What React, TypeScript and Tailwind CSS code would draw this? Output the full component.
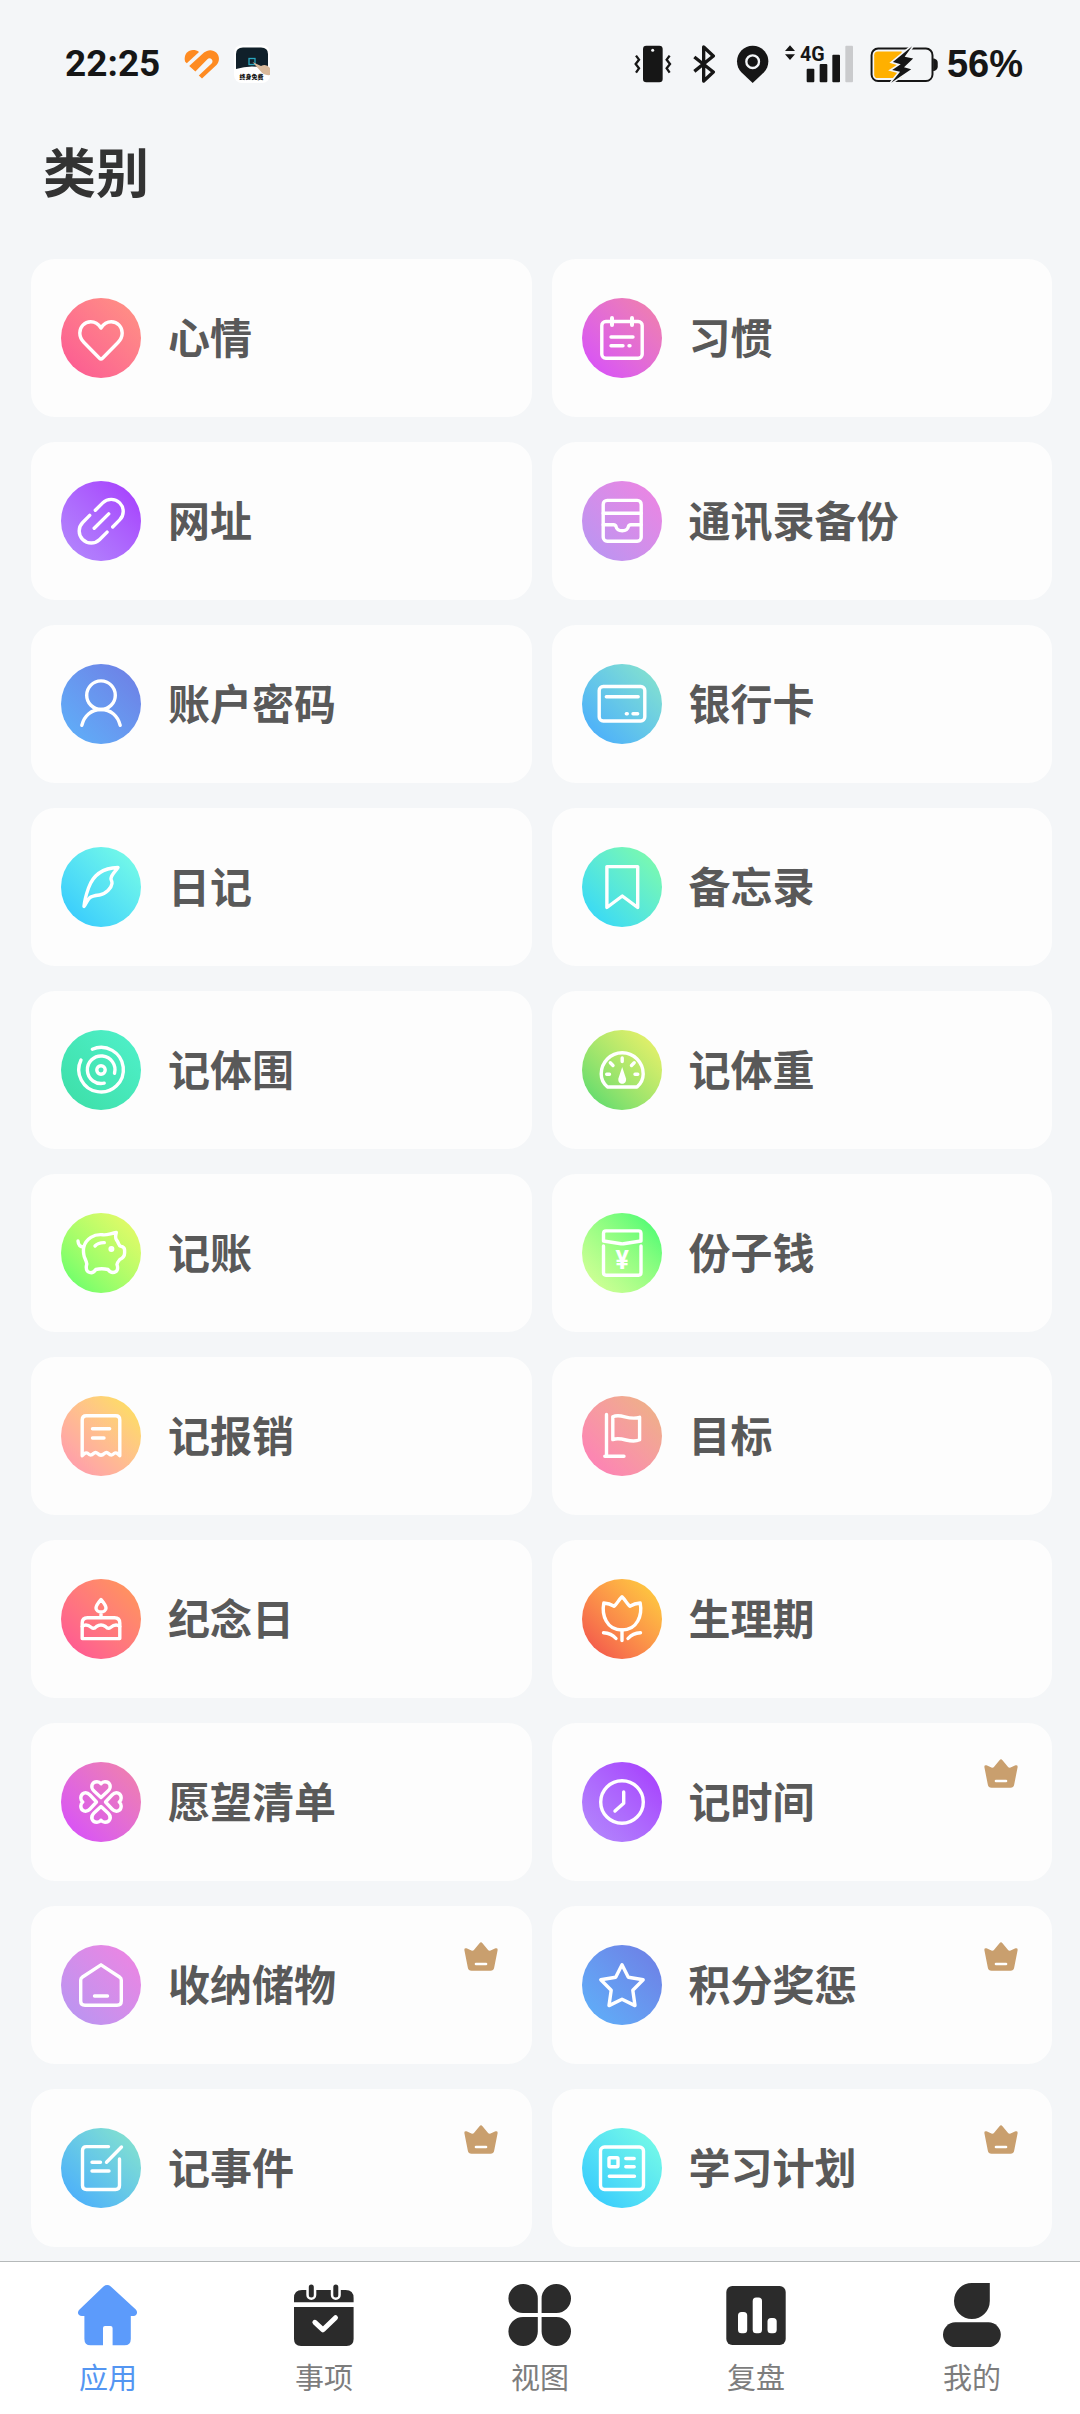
import type { ReactNode } from "react";

type Category = {
  name: string;
  gradient: string;
  icon: ReactNode;
  vip?: boolean;
};

const categories: Category[] = [
  {
    name: "心情",
    gradient: "from-[#fb5594] to-[#ff9482]",
    icon: (
      <path d="M40 30C37 25.5 33.5 23.8 29.8 23.8C23.3 23.8 18.8 29 18.8 35C18.8 39 20.3 41.8 23 44.5L38.5 60.3Q40 61.8 41.5 60.3L57 44.5C59.7 41.8 61.2 39 61.2 35C61.2 29 56.7 23.8 50.2 23.8C46.5 23.8 43 25.5 40 30Z" />
    ),
  },
  {
    name: "习惯",
    gradient: "from-[#d648ff] to-[#f282a6]",
    icon: (
      <>
        <rect x="19.8" y="23.5" width="40.4" height="36.8" rx="4" />
        <path d="M30 20V27M50 20V27" strokeWidth="4" />
        <path d="M29 39H51M29 47.7H41M47 47.7H48" />
      </>
    ),
  },
  {
    name: "网址",
    gradient: "from-[#b38afc] to-[#a636fd]",
    icon: (
      <path d="M34.3 29.3L41.7 21.9A12 12 0 0 1 58.7 38.9L51.7 46M46.1 51.1L38.7 58.5A12 12 0 0 1 21.7 41.5L28.7 34.4M33.2 47.3L47.7 32.9" />
    ),
  },
  {
    name: "通讯录备份",
    gradient: "from-[#b496f3] to-[#f083e1]",
    icon: (
      <>
        <rect x="21.2" y="19.4" width="38" height="40.8" rx="4" />
        <path d="M21.2 32.2H59.2M21.2 43.7H31.5Q33.7 43.7 34.2 46C35.2 51 45.2 51 46.2 46Q46.7 43.7 48.9 43.7H59.2" />
      </>
    ),
  },
  {
    name: "账户密码",
    gradient: "from-[#5cb2fa] to-[#6e7ce4]",
    icon: (
      <>
        <circle cx="40" cy="31.2" r="14.3" />
        <path d="M20.8 61.3C23.3 51.5 30.5 45.5 40 45.5C49.5 45.5 56.7 51.5 59.2 61.3" />
      </>
    ),
  },
  {
    name: "银行卡",
    gradient: "from-[#46a8ff] to-[#8ae6c9]",
    icon: (
      <>
        <rect x="17.2" y="22.5" width="45.6" height="34.5" rx="4" />
        <path d="M24.3 32.7H56.2M44.3 49.7H45.3M51 49.7H55.7" />
      </>
    ),
  },
  {
    name: "日记",
    gradient: "from-[#2fc6ff] to-[#7bffe4]",
    icon: (
      <path d="M23 59.5C23.5 54 25 48 27.5 41C31.5 29.5 40 21 57 20.5C55 24 50.5 27 50 31.5C49.8 33.5 51.3 33.8 51 36.5C50.5 41 45 47 38.5 48C33 48.7 30.5 49 28.5 51C26 53.5 25.5 56.5 23 59.5Z" />
    ),
  },
  {
    name: "备忘录",
    gradient: "from-[#2bd4ff] to-[#83fda2]",
    icon: <path d="M24.9 19.6H55.7V60.5L40.3 49L24.9 60.5Z" />,
  },
  {
    name: "记体围",
    gradient: "from-[#3cdea6] to-[#50f1cb]",
    icon: (
      <>
        <path d="M31.3 19.2A22.3 22.3 0 1 1 20 30" />
        <path d="M53.5 43.3A13.8 13.8 0 1 0 43.2 53.2" />
        <circle cx="40" cy="40" r="4.2" />
      </>
    ),
  },
  {
    name: "记体重",
    gradient: "from-[#43d96e] to-[#f2f268]",
    icon: (
      <>
        <path d="M25.5 57C21.3 53.5 19.2 49 19.2 44A21 21.2 0 0 1 61.2 44C61.2 49 59 53.5 55 57Z" />
        <path d="M40.2 28V31.5M28.3 32.8L31 35.5M52.2 32.8L49.5 35.5M24.7 44.2H27.5M53 44.2H55.8" />
        <path
          d="M40.2 37L44 48.5C45.2 55.5 35.2 55.5 36.4 48.5Z"
          fill="white"
          stroke="none"
        />
      </>
    ),
  },
  {
    name: "记账",
    gradient: "from-[#50ff6c] to-[#eef967]",
    icon: (
      <>
        <path d="M17 28C17.2 31.5 19 34 22.8 34C25 25.5 33 20.8 42 21.8C45 22.5 49.5 20.5 55.3 19.5C54.5 22.5 54 25 55.5 27C57.5 29 57.5 32.5 59.5 33.2C62 33.8 63.6 34.5 63.6 37V40C63.6 44 61 45.5 58.8 46.5C57.5 48 56.3 49.5 56 51.5C57 54.5 57 57 55 58.6C52 60.3 49.5 60 47 56.5C43 55.5 38.5 55.5 34.8 56.5C32.5 60 29.5 60.3 26.8 58.6C24.5 56.5 25 54 25.8 51C25.5 47.5 23 45 22.8 41.5C22.3 38.5 22.2 36.5 22.8 34" />
        <path d="M34 33C36.5 30.3 39.5 29.5 43.3 29.6" />
        <circle cx="50.4" cy="36" r="3" fill="white" stroke="none" />
      </>
    ),
  },
  {
    name: "份子钱",
    gradient: "from-[#dbff99] to-[#21fb70]",
    icon: (
      <>
        <path d="M21.5 28V20.5Q21.5 17.9 24 17.9H56.5Q59 17.9 59 20.5V28L41.5 30.8Q40.3 31 39 30.8Z" />
        <path d="M21.5 33V59.5Q21.5 62.2 24 62.2H56.5Q59 62.2 59 59.5V33" />
        <text
          x="40.3"
          y="56"
          textAnchor="middle"
          fill="white"
          stroke="none"
          className="font-[Roboto,sans-serif] text-[25px] font-bold"
        >
          ¥
        </text>
      </>
    ),
  },
  {
    name: "记报销",
    gradient: "from-[#ff93b3] to-[#fce552]",
    icon: (
      <>
        <path d="M21.2 59.8V24Q21.2 19.8 25.4 19.8H54.6Q58.8 19.8 58.8 24V59.8Q55.5 55.5 53 57.5Q50.5 60.5 47.5 57.5Q45.5 55.5 43.3 57.5Q40 60.8 36.7 57.5Q34.5 55.5 32.5 57.5Q29.5 60.5 27 57.5Q24.5 55.5 21.2 59.8Z" />
        <path d="M31.5 32.7H48.7M31.5 42H43" />
      </>
    ),
  },
  {
    name: "目标",
    gradient: "from-[#ff7abb] to-[#ecb581]",
    icon: (
      <>
        <path d="M24.5 18.5V60.3M22.8 60.3H42" />
        <path d="M30.8 20.8C39.5 16.5 45.5 25 57.6 21.3V43.8C48 48.5 41 40 30.8 43.6Z" />
      </>
    ),
  },
  {
    name: "纪念日",
    gradient: "from-[#ff4f98] to-[#ff9a52]",
    icon: (
      <>
        <path d="M21.2 59.6V44Q21.2 38.7 26.5 38.7H53.5Q58.8 38.7 58.8 44V59.6Z" />
        <path d="M21.2 47.5C25 44.5 28 46.5 30.5 48.5Q33 50.5 35.5 47.5Q40 44.5 44.5 47.5Q47 50.5 49.5 48.5C52 46.5 55 44.5 58.8 47.5" />
        <path d="M40 20.5C43 24 45 26.3 45 29C45 34.3 35 34.3 35 29C35 26.3 37 24 40 20.5ZM40 33.5V38.5" />
      </>
    ),
  },
  {
    name: "生理期",
    gradient: "from-[#f0454c] to-[#fdd53a]",
    icon: (
      <>
        <path d="M40 17.8C36.5 21 35 25 32.2 27.2Q27.5 24.3 21.8 24C19.5 36 24.5 51 40 51C55.5 51 60.5 36 58.2 24Q52.5 24.3 47.8 27.2C45 25 43.5 21 40 17.8Z" />
        <path d="M40 51V61.5M21.5 53.8C27 54 31 56 34 59.5M58.5 53.8C53 54 49 56 46 59.5" />
      </>
    ),
  },
  {
    name: "愿望清单",
    gradient: "from-[#d648ff] to-[#f282a6]",
    icon: (
      <>
        {[0, 90, 180, 270].map((angle) => (
          <path
            key={angle}
            transform={`rotate(${angle} 40 40)`}
            d="M40 35.5L33 29C28.8 25 31 19.8 36 19.8Q38.5 19.8 40 21.8Q41.5 19.8 44 19.8C49 19.8 51.2 25 47 29Z"
          />
        ))}
      </>
    ),
  },
  {
    name: "记时间",
    gradient: "from-[#b38afc] to-[#a636fd]",
    vip: true,
    icon: (
      <>
        <circle cx="40" cy="40" r="21.3" />
        <path d="M41.7 30V41.3L33 49" />
      </>
    ),
  },
  {
    name: "收纳储物",
    gradient: "from-[#b496f3] to-[#f083e1]",
    vip: true,
    icon: (
      <>
        <path d="M40 19.8L21.5 32Q19.7 33.2 19.7 35V56Q19.7 60.2 24 60.2H56Q60.3 60.2 60.3 56V35Q60.3 33.2 58.5 32Z" />
        <path d="M33.5 51H46.5" />
      </>
    ),
  },
  {
    name: "积分奖惩",
    gradient: "from-[#5cb2fa] to-[#6e7ce4]",
    vip: true,
    icon: (
      <path d="M40 19.8L46.3 32.3L61.2 34.8L50.8 45.3L53 60.6L40 54.3L27 60.6L29.2 45.3L18.8 34.8L33.7 32.3Z" />
    ),
  },
  {
    name: "记事件",
    gradient: "from-[#46a8ff] to-[#8ae6c9]",
    vip: true,
    icon: (
      <>
        <path d="M47.5 18.6H25.5Q21.5 18.6 21.5 22.6V57.5Q21.5 61.5 25.5 61.5H54.5Q58.5 61.5 58.5 57.5V31" />
        <path d="M60.5 19L45.5 34.3M31 34.3H39.5M31 43H48" />
      </>
    ),
  },
  {
    name: "学习计划",
    gradient: "from-[#2fc6ff] to-[#7bffe4]",
    vip: true,
    icon: (
      <>
        <rect x="18.5" y="19" width="43" height="42.5" rx="4" />
        <rect x="27" y="29.7" width="9" height="9" rx="1" />
        <path d="M43.8 30.5H52.2M43.8 38.7H52.2M27.3 48.3H52.5" />
      </>
    ),
  },
];

const tabs = [
  {
    name: "应用",
    href: "#apps",
    active: true,
    icon: (
      <path d="M27.5 3.5Q31.2 .6 34.8 3.5L59.8 26.5C62.5 29.5 60.5 33 57.5 33H54.8V56Q54.8 62.3 48.5 62.3H36.6V45Q36.6 43 34.5 43H29Q27 43 27 45V62.3H14.5Q8.4 62.3 8.4 56V33H6C2 33 .6 29.5 3.5 26.5Z" />
    ),
  },
  {
    name: "事项",
    href: "#tasks",
    icon: (
      <>
        <path d="M2 19.3V15Q2 7 10 7H53.6Q61.6 7 61.6 15V19.3ZM2 24H61.6V56Q61.6 63 54.6 63H9Q2 63 2 56Z" />
        <path
          d="M19.3 4V12M43.8 4V12"
          stroke="white"
          strokeWidth="10"
          strokeLinecap="round"
        />
        <path
          d="M19.3 4V12M43.8 4V12"
          stroke="#2b2b2b"
          strokeWidth="5"
          strokeLinecap="round"
        />
        <path
          d="M22.9 39.3L31 46.8L43.5 34.7"
          fill="none"
          stroke="white"
          strokeWidth="5"
          strokeLinecap="round"
          strokeLinejoin="round"
        />
      </>
    ),
  },
  {
    name: "视图",
    href: "#views",
    icon: (
      <path d="M29.8 30V15.5A14.7 14.5 0 1 0 15 30ZM33.6 30V15.5A14.7 14.5 0 1 1 48.4 30ZM29.8 34V48.5A14.7 14.5 0 1 1 15 34ZM33.6 34V48.5A14.7 14.5 0 1 0 48.4 34Z" />
    ),
  },
  {
    name: "复盘",
    href: "#review",
    icon: (
      <>
        <rect x="2.3" y="3" width="59.4" height="59" rx="6" />
        <g fill="white">
          <rect x="14" y="29" width="9.2" height="21.3" rx="3.5" />
          <rect x="28.7" y="14.5" width="9.3" height="35.8" rx="3.5" />
          <rect x="43.5" y="35" width="9.2" height="15.3" rx="3.5" />
        </g>
      </>
    ),
  },
  {
    name: "我的",
    href: "#me",
    icon: (
      <>
        <path d="M49.8 0V18A17.9 18 0 1 1 31.9 0Z" />
        <rect x="3" y="39.3" width="57.8" height="24.7" rx="12.3" />
      </>
    ),
  },
];

function StatusBar() {
  return (
    <div className="flex items-center justify-between pt-[45px] pr-[57px] pl-[65px] text-[#161616]">
      <div className="flex h-[38px] items-center">
        <span className="font-[Roboto,sans-serif] text-[37px] leading-[38px] font-bold">
          22:25
        </span>
        <svg viewBox="0 0 36 30" className="ml-6 h-[30px] w-9" fill="#fe8b22">
          <path d="M1.2 12.8C-.8 7 3 1 9 1C11.5 1 13.3 1.6 15 3L2.8 14.2Z" />
          <path d="M5.2 17L20 3.6C23.5 .4 29 .2 32.5 3.8C36 7.6 35.6 12.8 32.5 16L18 29.6L14.8 26.6L27.6 14.4C28.8 13.2 28.8 11.4 27.6 10.2C26.4 9 24.6 9 23.4 10.2L11.4 22.6Z" />
          <path
            d="M12.2 24.8L23.8 13"
            stroke="#f4f6f8"
            strokeWidth="2.4"
            fill="none"
          />
        </svg>
        <svg viewBox="0 0 36 38" className="ml-3.5 h-[38px] w-9">
          <rect width="36" height="38" rx="8" fill="white" />
          <path
            d="M2 24V9Q2 2.5 9 2.5H27Q34 2.5 34 9V24Q18 19 2 24Z"
            fill="#10202a"
          />
          <rect
            x="15"
            y="13.5"
            width="6"
            height="6"
            fill="none"
            stroke="#2aa7bf"
            strokeWidth="1.3"
          />
          <path
            d="M18.5 17L27 21Q32 18 36 23V30Q30 31 26 25.5Z"
            fill="#d9b99a"
          />
          <text
            x="17.5"
            y="34"
            textAnchor="middle"
            fill="#111111"
            className="text-[6px] font-black"
          >
            终身免费
          </text>
        </svg>
      </div>

      <div className="flex h-[38px] items-center gap-4">
        {/* Vibrate */}
        <svg viewBox="102 76 114 114" className="h-[38px] w-[38px]">
          <rect x="129" y="78" width="59" height="110" rx="10" fill="#161616" />
          <circle cx="158" cy="92" r="4.5" fill="#f4f6f8" />
          <path
            d="M108 108L117 120L107 133L117 146L108 159M209 108L200 120L210 133L200 146L209 159"
            fill="none"
            stroke="#161616"
            strokeWidth="7"
          />
        </svg>
        {/* Bluetooth */}
        <svg viewBox="264 76 96 114" className="h-[38px] w-8">
          <path
            d="M283 112L340 157L311 184V82L340 109L283 155"
            fill="none"
            stroke="#161616"
            strokeWidth="10"
            strokeLinejoin="round"
          />
        </svg>
        {/* Location */}
        <svg viewBox="410 76 99 114" className="h-[38px] w-[33px]">
          <path
            d="M460 190L426 158C418 150 413 139 413 125C413 99 434 78 460 78C486 78 507 99 507 125C507 139 502 150 494 158Z"
            fill="#161616"
          />
          <circle
            cx="460"
            cy="126"
            r="19"
            fill="#161616"
            stroke="#f4f6f8"
            strokeWidth="7"
          />
        </svg>
        {/* Signal */}
        <svg
          viewBox="555 76 204 114"
          className="h-[38px] w-[68px] overflow-visible"
        >
          <g fill="#161616">
            <path d="M555 94L570 77L585 94ZM555 104L570 121L585 104Z" />
            <rect x="620" y="147" width="23" height="41" rx="3" />
            <rect x="659" y="133" width="23" height="55" rx="3" />
            <rect x="697" y="105" width="23" height="83" rx="3" />
            <text
              x="600"
              y="124"
              className="font-[Roboto,sans-serif] text-[59px] font-bold"
            >
              4G
            </text>
          </g>
          <rect x="736" y="78" width="23" height="110" rx="3" fill="#cacbcd" />
        </svg>
        <div className="flex items-center gap-2">
          <svg viewBox="807 76 210 116" className="h-[38px] w-[70px]">
            <rect
              x="813"
              y="87"
              width="186"
              height="99"
              rx="20"
              fill="none"
              stroke="#161616"
              strokeWidth="6"
            />
            <path
              d="M1001 117H1004Q1015 120 1015 130V142Q1015 152 1004 155H1001Z"
              fill="#161616"
            />
            <path
              d="M832 96H905V177H832Q821 177 821 166V107Q821 96 832 96Z"
              fill="#ffb000"
            />
            <path
              d="M937 80L878 128L902 135L876 152L900 158L873 191L934 150L912 144L940 117L914 112Z"
              fill="#161616"
              stroke="#f4f6f8"
              strokeWidth="10"
              paintOrder="stroke"
            />
          </svg>
          <span className="font-['Liberation_Sans',sans-serif] text-[38px] leading-[38px] font-bold">
            56%
          </span>
        </div>
      </div>
    </div>
  );
}

function CategoryCard({ category }: { category: Category }) {
  return (
    <button
      type="button"
      className="relative flex items-center gap-[27px] rounded-3xl bg-[#fdfdfd] px-[30px] py-[39px] text-left"
    >
      <span
        className={`size-20 shrink-0 rounded-full bg-linear-to-tr ${category.gradient}`}
      >
        <svg
          viewBox="0 0 80 80"
          className="size-20"
          fill="none"
          stroke="white"
          strokeWidth="3.4"
          strokeLinecap="round"
          strokeLinejoin="round"
        >
          {category.icon}
        </svg>
      </span>
      <span className="pb-1 text-[42px] leading-[60px] font-bold text-[#595959]">
        {category.name}
      </span>
      {category.vip && (
        <svg
          viewBox="0 0 34 29"
          className="absolute top-9 right-[34px] h-[29px] w-[34px]"
        >
          <path
            d="M15.5 1.2Q17 -.5 18.5 1.2L24.3 8.2Q25.3 9 26.5 8.5L31.5 6.3Q34 5.8 33.6 8.3L30.2 25.5Q29.6 28.7 26.5 28.7H7.5Q4.4 28.7 3.8 25.5L.4 8.3Q0 5.8 2.5 6.3L7.5 8.5Q8.7 9 9.7 8.2Z"
            fill="#c99f6e"
          />
          <path
            d="M12 22H22"
            stroke="white"
            strokeWidth="2.6"
            strokeLinecap="round"
          />
        </svg>
      )}
    </button>
  );
}

function TabBar() {
  return (
    <nav className="sticky bottom-0 mt-auto grid grid-cols-5 border-t border-[#b5b9ba] bg-white pt-[21px] pb-[18px]">
      {tabs.map((tab) => (
        <a
          key={tab.name}
          href={tab.href}
          className="flex flex-col items-center gap-[9px]"
        >
          <svg
            viewBox="0 0 64 64"
            className="size-16"
            fill={tab.active ? "#5c9bfb" : "#2b2b2b"}
          >
            {tab.icon}
          </svg>
          <span
            className={`text-[29px] leading-10 ${tab.active ? "text-[#5496f2]" : "text-[#7d7d7d]"}`}
          >
            {tab.name}
          </span>
        </a>
      ))}
    </nav>
  );
}

function App() {
  return (
    <div className="flex min-h-screen flex-col bg-[#f4f6f8] font-['Noto_Sans_CJK_SC',sans-serif]">
      <StatusBar />
      <h1 className="mt-[55px] mb-[57px] px-[43px] text-[53px] leading-[64px] font-bold text-[#333333]">
        类别
      </h1>
      <main className="grid grid-cols-2 gap-x-5 gap-y-[25px] pr-7 pb-3.5 pl-[31px]">
        {categories.map((category) => (
          <CategoryCard key={category.name} category={category} />
        ))}
      </main>
      <TabBar />
    </div>
  );
}

export default App;
